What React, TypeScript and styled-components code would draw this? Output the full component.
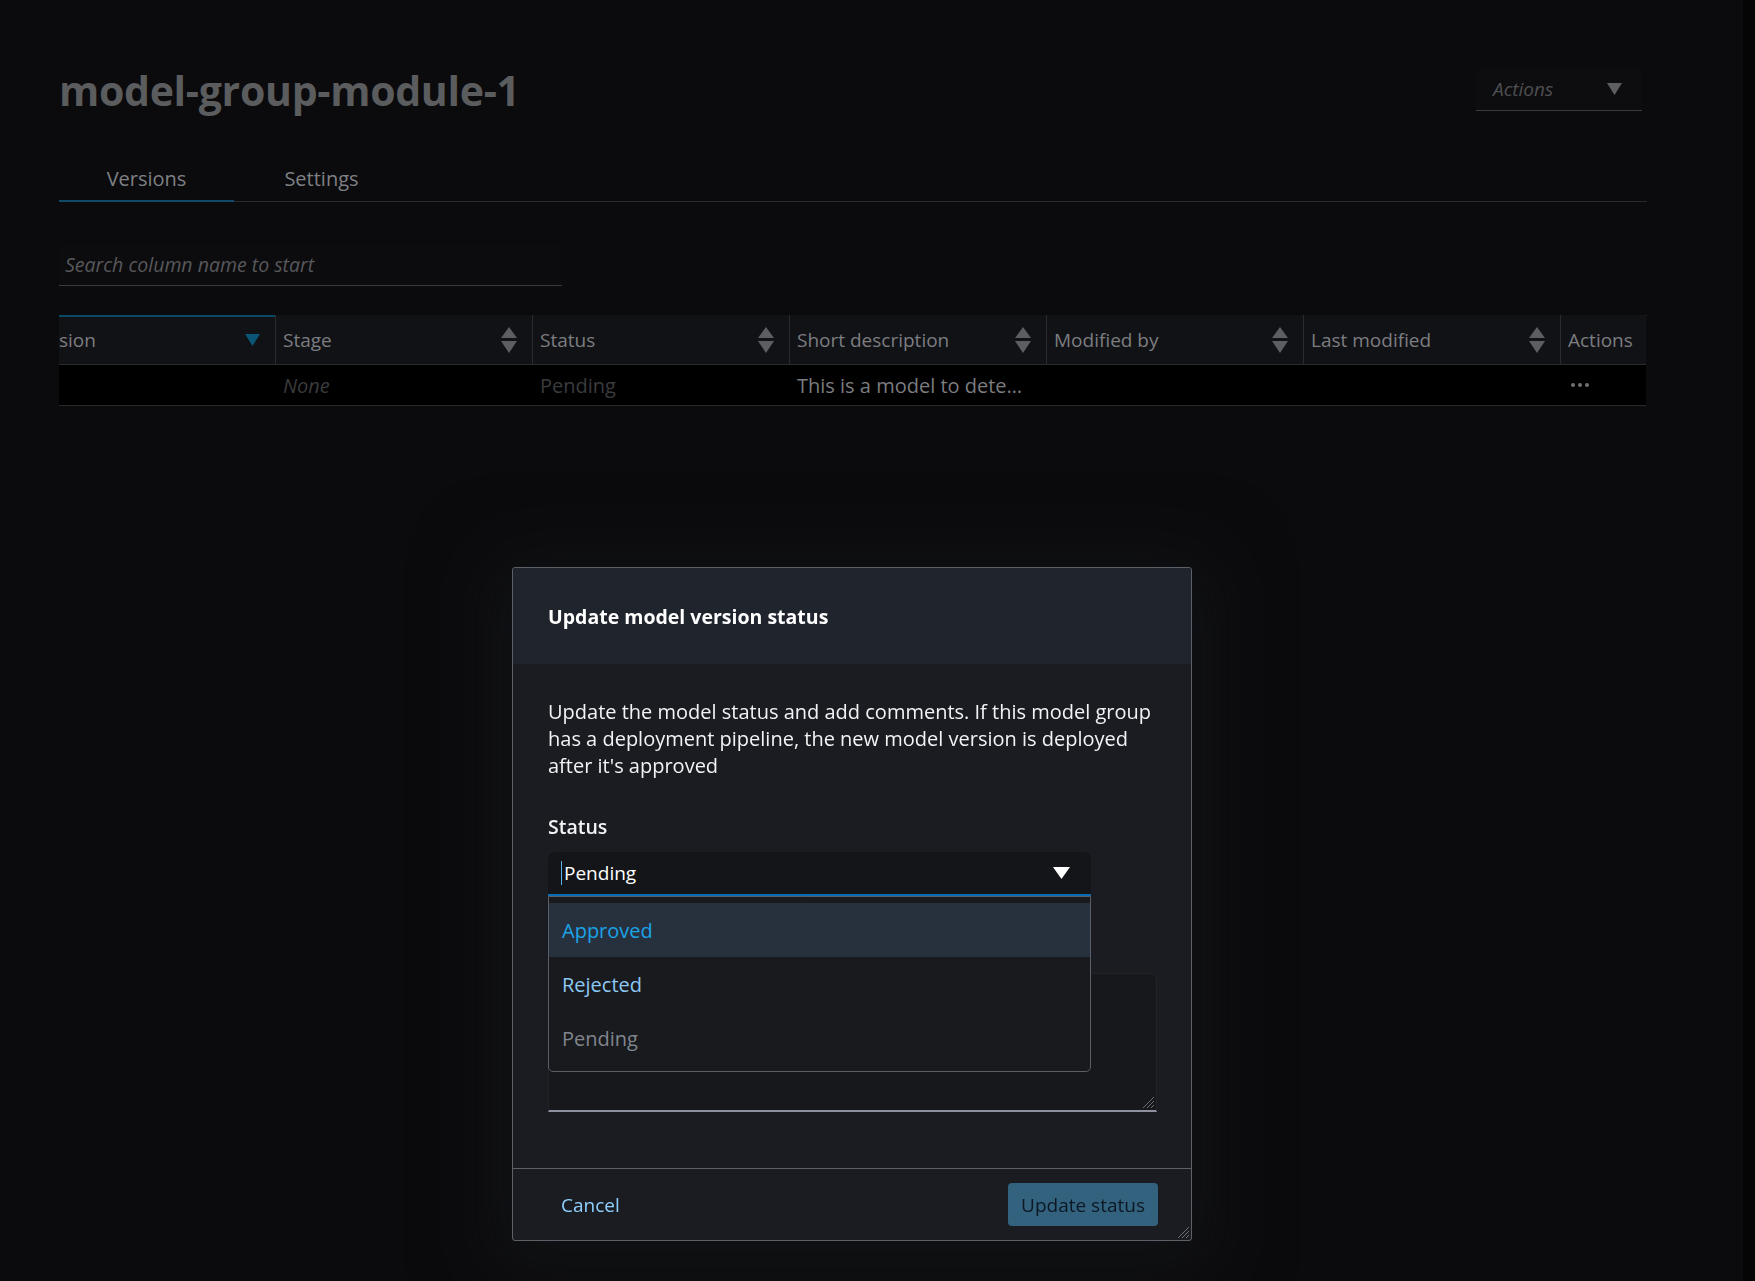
import React from "react";
import styled, { createGlobalStyle } from "styled-components";

const GlobalStyle = createGlobalStyle`
  html, body { margin: 0; padding: 0; background: #0b0b0d; }
  body { font-family: "Open Sans", "Noto Sans", Arial, sans-serif; }
  * { box-sizing: border-box; }
`;

const Viewport = styled.div`
  display: flex;
  width: 1755px;
  height: 1281px;
  overflow: hidden;
  background: #0b0b0d;
`;

const Page = styled.div`
  flex: 1;
  padding: 0 0 0 59px;
`;

const ScrollStrip = styled.div`
  width: 12px;
  background: #050506;
`;

const Main = styled.div`
  width: 1588px;
  display: flex;
  flex-direction: column;
`;

const TitleRow = styled.div`
  display: flex;
  align-items: center;
  justify-content: space-between;
  padding-top: 64px;
  height: 116px;
`;

const Title = styled.h1`
  margin: 0;
  font-size: 41px;
  font-weight: 700;
  line-height: 52px;
  color: #5b5c5e;
  letter-spacing: -0.3px;
`;

const ActionsButton = styled.div`
  width: 166px;
  height: 42px;
  margin-right: 5px;
  margin-top: -1px;
  display: flex;
  align-items: center;
  justify-content: space-between;
  padding: 0 20px 0 17px;
  background: #0d0d10;
  border-bottom: 1px solid #3a3b3e;
  border-radius: 4px 4px 0 0;
  color: #4e4f52;
  font-style: italic;
  font-size: 19px;
`;

const Tabs = styled.div`
  display: flex;
  border-bottom: 1px solid #2a2b2e;
  height: 86px;
  align-items: flex-end;
`;

const Tab = styled.div<{ $active?: boolean }>`
  width: 175px;
  height: 35px;
  display: flex;
  align-items: flex-start;
  justify-content: center;
  font-size: 20px;
  line-height: 24px;
  color: #7f8083;
  border-bottom: 2px solid ${(p) => (p.$active ? "#0f4a66" : "transparent")};
  margin-bottom: -1px;
`;

const Search = styled.div`
  width: 503px;
  height: 42px;
  margin-top: 42px;
  display: flex;
  align-items: center;
  padding-left: 6px;
  background: #0c0c0e;
  border-bottom: 1px solid #3a3b3e;
  border-radius: 4px 4px 0 0;
  font-size: 19.5px;
  font-style: italic;
  color: #57585b;
`;

const Table = styled.div`
  margin-top: 29px;
  display: grid;
  grid-template-columns: 216px repeat(5, 257px) 86px;
  border-top: 1px solid #2a2b2f;
`;

const HeadCell = styled.div<{ $first?: boolean }>`
  height: 50px;
  display: flex;
  align-items: center;
  justify-content: space-between;
  padding: 0 15px 0 7px;
  background: #111216;
  border-bottom: 1px solid #2a2b2f;
  border-left: ${(p) => (p.$first ? "none" : "1px solid #2a2b2f")};
  box-shadow: ${(p) => (p.$first ? "inset 0 2px 0 #0b4a67" : "none")};
  margin-top: -1px;
  font-size: 19px;
  color: #7c7d80;
  white-space: nowrap;
  overflow: hidden;
`;

const FirstHeadText = styled.span`
  margin-left: -7px;
`;

const Cell = styled.div<{ $tone?: "dim" | "text" | "none" }>`
  height: 41px;
  display: flex;
  align-items: center;
  padding: 0 8px;
  background: #000;
  border-bottom: 1px solid #2a2b2f;
  font-size: 20px;
  white-space: nowrap;
  color: ${(p) => (p.$tone === "text" ? "#7b7c7f" : "#3a3b3d")};
  font-style: ${(p) => (p.$tone === "none" ? "italic" : "normal")};
`;

const Dots = styled.div`
  display: flex;
  gap: 3px;
  margin-left: 3px;
  span {
    width: 4px;
    height: 4px;
    border-radius: 50%;
    background: #707174;
  }
`;

const Overlay = styled.div`
  position: fixed;
  inset: 0;
`;

const Modal = styled.div`
  position: absolute;
  left: 512px;
  top: 567px;
  width: 680px;
  height: 674px;
  display: flex;
  flex-direction: column;
  border: 1px solid #5d6167;
  border-radius: 3px;
  background: #1b1c21;
  box-shadow: 0 12px 70px 24px rgba(22, 23, 27, 0.55);
`;

const ModalHeader = styled.div`
  height: 96px;
  display: flex;
  align-items: center;
  padding: 0 0 0 35px;
  background: #1f242d;
  border-radius: 3px 3px 0 0;
  font-size: 19.5px;
  font-weight: 700;
  color: #ffffff;
`;

const ModalBody = styled.div`
  flex: 1;
  padding: 34px 34px 0 35px;
  display: flex;
  flex-direction: column;
`;

const Description = styled.p`
  margin: 0;
  font-size: 20px;
  line-height: 27px;
  color: #f2f3f5;
  white-space: nowrap;
`;

const Field = styled.div`
  position: relative;
  display: flex;
  flex-direction: column;
`;

const Label = styled.div`
  margin-top: 34px;
  font-size: 19.5px;
  font-weight: 600;
  line-height: 27px;
  color: #f2f3f5;
`;

const SelectBox = styled.div`
  position: relative;
  margin-top: 12px;
  width: 543px;
  height: 44px;
  display: flex;
  align-items: center;
  justify-content: space-between;
  padding: 0 21px 0 13px;
  background: #141519;
  border-radius: 6px 6px 0 0;
  border-bottom: 2px solid #0a6bb3;
  font-size: 19px;
  color: #ffffff;
`;

const Caret = styled.span`
  width: 1px;
  height: 24px;
  background: #59b2ec;
  margin-right: 2px;
`;

const SelectValue = styled.div`
  display: flex;
  align-items: center;
`;

const Dropdown = styled.div`
  position: absolute;
  left: 0;
  top: calc(100% + 2px);
  width: 543px;
  z-index: 2;
  padding: 6px 0;
  background: #191a1e;
  border: 1px solid #5a5e66;
  border-radius: 0 0 5px 5px;
`;

const Option = styled.div<{ $color: string; $active?: boolean }>`
  height: 54px;
  display: flex;
  align-items: center;
  padding-left: 13px;
  font-size: 20px;
  color: ${(p) => p.$color};
  background: ${(p) => (p.$active ? "#27313e" : "transparent")};
`;

const TextArea = styled.div`
  position: relative;
  margin-top: 77px;
  width: 609px;
  height: 139px;
  background: #17181c;
  border: 1px solid #212227;
  border-bottom: 2px solid #8e91a0;
  border-radius: 6px 6px 0 0;
`;

const Grip = styled.svg`
  position: absolute;
  right: 1px;
  bottom: 1px;
`;

const ModalFooter = styled.div`
  position: relative;
  height: 72px;
  display: flex;
  align-items: center;
  justify-content: space-between;
  padding: 0 33px 0 35px;
  border-top: 1px solid #5d6167;
`;

const LinkButton = styled.div`
  padding: 0 13px;
  font-size: 19px;
  color: #8fd0ff;
`;

const PrimaryButton = styled.div`
  width: 150px;
  height: 43px;
  display: flex;
  align-items: center;
  justify-content: center;
  background: #33627f;
  border-radius: 4px;
  font-size: 19px;
  color: #0c1824;
`;

const SortIcon = ({ color = "#5d5e62" }: { color?: string }) => (
  <svg width="16" height="26" viewBox="0 0 16 26">
    <polygon points="8,0 16,11 0,11" fill={color} />
    <polygon points="0,14 16,14 8,26" fill={color} />
  </svg>
);

const DownTri = ({ w, h, color }: { w: number; h: number; color: string }) => (
  <svg width={w} height={h} viewBox={`0 0 ${w} ${h}`}>
    <polygon points={`0,0 ${w},0 ${w / 2},${h}`} fill={color} />
  </svg>
);

const GripIcon = () => (
  <Grip width="14" height="14" viewBox="0 0 14 14">
    <line x1="13" y1="2" x2="2" y2="13" stroke="#6b6e76" strokeWidth="1" />
    <line x1="13" y1="6" x2="6" y2="13" stroke="#6b6e76" strokeWidth="1" />
    <line x1="13" y1="10" x2="10" y2="13" stroke="#6b6e76" strokeWidth="1" />
  </Grip>
);

const columns = ["Stage", "Status", "Short description", "Modified by", "Last modified"];

export default function App() {
  return (
    <>
      <GlobalStyle />
      <Viewport>
        <Page>
          <Main>
            <TitleRow>
              <Title>model-group-module-1</Title>
              <ActionsButton>
                Actions
                <DownTri w={15} h={12} color="#5e5f62" />
              </ActionsButton>
            </TitleRow>
            <Tabs>
              <Tab $active>Versions</Tab>
              <Tab>Settings</Tab>
            </Tabs>
            <Search>Search column name to start</Search>
            <Table>
              <HeadCell $first>
                <FirstHeadText>sion</FirstHeadText>
                <DownTri w={15} h={12} color="#0b5577" />
              </HeadCell>
              {columns.map((c) => (
                <HeadCell key={c}>
                  {c}
                  <SortIcon />
                </HeadCell>
              ))}
              <HeadCell>Actions</HeadCell>
              <Cell />
              <Cell $tone="none">None</Cell>
              <Cell $tone="dim">Pending</Cell>
              <Cell $tone="text">This is a model to dete…</Cell>
              <Cell />
              <Cell />
              <Cell>
                <Dots>
                  <span />
                  <span />
                  <span />
                </Dots>
              </Cell>
            </Table>
          </Main>
        </Page>
        <ScrollStrip />
      </Viewport>
      <Overlay>
        <Modal>
          <ModalHeader>Update model version status</ModalHeader>
          <ModalBody>
            <Description>
              Update the model status and add comments. If this model group
              <br />
              has a deployment pipeline, the new model version is deployed
              <br />
              after it's approved
            </Description>
            <Field>
              <Label>Status</Label>
              <SelectBox>
                <SelectValue>
                  <Caret />
                  Pending
                </SelectValue>
                <DownTri w={17} h={12} color="#ffffff" />
                <Dropdown>
                  <Option $color="#1ba3e6" $active>
                    Approved
                  </Option>
                  <Option $color="#8cc8f2">Rejected</Option>
                  <Option $color="#80858e">Pending</Option>
                </Dropdown>
              </SelectBox>
            </Field>
            <TextArea>
              <GripIcon />
            </TextArea>
          </ModalBody>
          <ModalFooter>
            <LinkButton>Cancel</LinkButton>
            <PrimaryButton>Update status</PrimaryButton>
            <GripIcon />
          </ModalFooter>
        </Modal>
      </Overlay>
    </>
  );
}
